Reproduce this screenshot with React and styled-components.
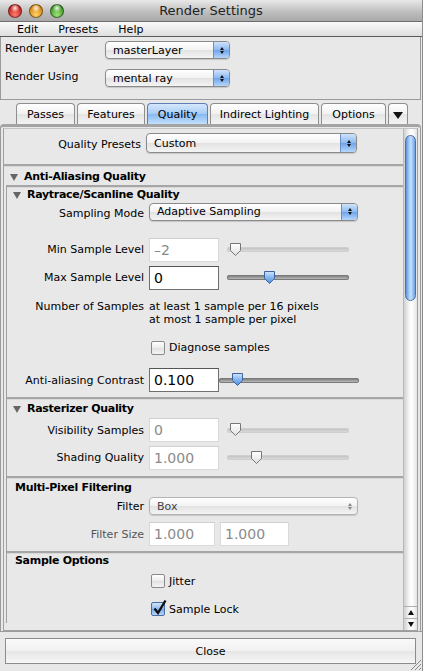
import React from 'react';
import styled, { createGlobalStyle, css } from 'styled-components';

const Global = createGlobalStyle`
  html, body { margin: 0; padding: 0; background: #e8e8e8; }
  * { box-sizing: border-box; }
  body { font-family: "DejaVu Sans", "Liberation Sans", sans-serif; font-size: 11px; color: #000; }
`;

const Window = styled.div`
  width: 423px;
  height: 671px;
  display: flex;
  flex-direction: column;
  background: #e8e8e8;
  border-right: 1px solid #8c8c8c;
  overflow: hidden;
  position: relative;
`;

const TitleBar = styled.div`
  height: 22px;
  flex: none;
  display: flex;
  align-items: center;
  position: relative;
  background: linear-gradient(#e8e8e8, #bcbcbc 60%, #a9a9a9);
  border-bottom: 1px solid #6e6e6e;
`;

const Lights = styled.div`
  display: flex;
  gap: 7px;
  padding-left: 8px;
`;

const Light = styled.span`
  width: 14px;
  height: 14px;
  border-radius: 50%;
  border: 1px solid rgba(0, 0, 0, 0.45);
  background:
    radial-gradient(circle at 50% 25%, rgba(255,255,255,0.9) 0, rgba(255,255,255,0) 40%),
    radial-gradient(circle at 50% 80%, ${p => p.$glow} 0, ${p => p.$c} 70%);
`;

const Title = styled.div`
  position: absolute;
  left: 0;
  right: 0;
  text-align: center;
  font-size: 13px;
  color: #222;
  pointer-events: none;
`;

const MenuBar = styled.div`
  height: 15px;
  flex: none;
  display: flex;
  align-items: center;
  padding-left: 17px;
  font-size: 11px;
  background: linear-gradient(#fafafa, #dedede);
  border-bottom: 1px solid #5a5a5a;
`;

const MenuItem = styled.span`
  margin-right: ${p => p.$mr}px;
`;

const TopPanel = styled.div`
  height: 63px;
  flex: none;
  border: 1px solid #9a9a9a;
  border-top: none;
  margin-right: 1px;
  padding: 4px 0 0 4px;
  display: flex;
  flex-direction: column;
  gap: 10px;
`;

const TopRow = styled.div`
  display: flex;
  align-items: center;
  height: 18px;
`;

const TopLabel = styled.span`
  width: 100px;
  margin-top: -4px;
`;

const Popup = styled.div`
  height: ${p => p.$h || 18}px;
  width: ${p => p.$w}px;
  display: flex;
  align-items: center;
  border: 1px solid ${p => (p.$disabled ? '#b4b4b4' : '#8a8a8a')};
  border-radius: 4px;
  background: linear-gradient(#ffffff, #f2f2f2 50%, #e2e2e2 51%, #f4f4f4);
  font-size: 11px;
  color: ${p => (p.$disabled ? '#444' : '#000')};
  overflow: hidden;
  box-shadow: 0 1px 1px rgba(0, 0, 0, 0.15);
`;

const PopupText = styled.span`
  flex: 1;
  padding-left: 7px;
`;

const PopupArrows = styled.span`
  width: 16px;
  align-self: stretch;
  display: flex;
  flex-direction: column;
  align-items: center;
  justify-content: center;
  gap: 1px;
  border-left: 1px solid ${p => (p.$disabled ? 'transparent' : '#6c8fc4')};
  background: ${p =>
    p.$disabled
      ? 'transparent'
      : 'linear-gradient(#cfe3fb, #8db9ef 50%, #6ea4ea 51%, #b6d6fb)'};
`;

const Arrow = styled.span`
  width: 0;
  height: 0;
  border-left: 2.5px solid transparent;
  border-right: 2.5px solid transparent;
  ${p =>
    p.$up
      ? css`border-bottom: 3px solid ${p.$disabled ? '#888' : '#111'};`
      : css`border-top: 3px solid ${p.$disabled ? '#888' : '#111'};`}
`;

const PopupButton = ({ text, w, h, disabled }) => (
  <Popup $w={w} $h={h} $disabled={disabled}>
    <PopupText>{text}</PopupText>
    <PopupArrows $disabled={disabled}>
      <Arrow $up $disabled={disabled} />
      <Arrow $disabled={disabled} />
    </PopupArrows>
  </Popup>
);

const TabBar = styled.div`
  height: 24px;
  flex: none;
  display: flex;
  align-items: flex-end;
  padding: 0 0 0 16px;
  gap: 2px;
  position: relative;
  z-index: 1;
`;

const Tab = styled.div`
  height: 21px;
  width: ${p => p.$w}px;
  flex: none;
  white-space: nowrap;
  display: flex;
  align-items: center;
  justify-content: center;
  font-size: 11px;
  border: 1px solid ${p => (p.$active ? '#5d7fb4' : '#8e8e8e')};
  border-bottom: none;
  border-radius: 4px 4px 0 0;
  background: ${p =>
    p.$active
      ? 'linear-gradient(#d6e8fc, #a6cbf4 50%, #86b8f0 51%, #c4e0fd)'
      : 'linear-gradient(#ffffff, #f1f1f1 50%, #e4e4e4 51%, #f3f3f3)'};
`;

const TabArrow = styled.span`
  width: 0;
  height: 0;
  border-left: 5px solid transparent;
  border-right: 5px solid transparent;
  border-top: 7px solid #111;
  margin-top: 3px;
`;

const TabPanel = styled.div`
  flex: 1;
  min-height: 0;
  margin: 0 1px 0 0;
  border-top: 3px solid #a4a4a4;
  border-left: 1px solid #9a9a9a;
  border-right: 1px solid #9a9a9a;
  border-radius: 4px 4px 0 0;
  padding: 1px 2px 0 2px;
  display: flex;
`;

const ScrollBox = styled.div`
  flex: 1;
  display: flex;
  min-height: 0;
  border: 1px solid #a0a0a0;
  border-top-color: #c4c4c4;
`;

const Content = styled.div`
  flex: 1;
  display: flex;
  flex-direction: column;
  overflow: hidden;
`;

const Scrollbar = styled.div`
  width: 14px;
  flex: none;
  display: flex;
  flex-direction: column;
  border-left: 1px solid #b8b8b8;
  background: linear-gradient(90deg, #d0d0d0, #f6f6f6 40%, #ffffff 60%, #e4e4e4);
`;

const Track = styled.div`
  flex: 1;
  padding: 6px 1px 0 1px;
`;

const Thumb = styled.div`
  height: 166px;
  border-radius: 6px;
  border: 1px solid #4f6fa8;
  background: linear-gradient(90deg, #5d92dc, #a7cdf7 35%, #c4e0fc 55%, #6a9fe4);
`;

const ScrollBtn = styled.div`
  height: 12px;
  display: flex;
  align-items: center;
  justify-content: center;
  border-top: 1px solid #b0b0b0;
`;

const SmallTri = styled.span`
  width: 0;
  height: 0;
  border-left: 3px solid transparent;
  border-right: 3px solid transparent;
  ${p => (p.$up ? 'border-bottom: 5px solid #111;' : 'border-top: 5px solid #111;')}
`;

const Row = styled.div`
  display: flex;
  align-items: ${p => (p.$top ? 'flex-start' : 'center')};
  height: ${p => p.$h}px;
  padding-top: ${p => p.$pt || 0}px;
  flex: none;
`;

const Label = styled.span`
  width: 142px;
  flex: none;
  text-align: right;
  padding-right: 5px;
  color: ${p => (p.$dim ? '#555' : '#000')};
  margin-top: ${p => p.$mt || 0}px;
  line-height: 13px;
`;

const Field = styled.div`
  width: ${p => p.$w || 70}px;
  height: 24px;
  flex: none;
  background: #fff;
  border: 1px solid ${p => (p.$disabled ? '#dadada' : '#6f6f6f')};
  border-top-color: ${p => (p.$disabled ? '#cfcfcf' : '#555')};
  display: flex;
  align-items: center;
  padding-left: 4px;
  font-size: 14px;
  color: ${p => (p.$disabled ? '#8a8a8a' : '#000')};
  margin-right: ${p => p.$mr || 0}px;
`;

const SliderWrap = styled.div`
  position: relative;
  width: ${p => p.$w}px;
  height: 14px;
  margin-left: ${p => p.$ml}px;
  display: flex;
  align-items: center;
`;

const SliderTrack = styled.div`
  width: 100%;
  height: 5px;
  border-radius: 3px;
  background: ${p =>
    p.$disabled ? 'linear-gradient(#bdbdbd, #e0e0e0)' : 'linear-gradient(#6a6a6a, #a8a8a8 60%, #c8c8c8)'};
  box-shadow: inset 0 0 0 1px ${p => (p.$disabled ? '#cfcfcf' : '#7a7a7a')};
`;

const SliderKnob = styled.svg`
  position: absolute;
  top: -1px;
`;

const Slider = ({ w, ml, pos, disabled }) => (
  <SliderWrap $w={w} $ml={ml}>
    <SliderTrack $disabled={disabled} />
    <SliderKnob width="13" height="15" viewBox="0 0 13 15" style={{ left: pos }}>
      <defs>
        <linearGradient id="kb" x1="0" y1="0" x2="0" y2="1">
          <stop offset="0" stopColor="#d2e6fc" />
          <stop offset="0.5" stopColor="#86b6ef" />
          <stop offset="1" stopColor="#4f8de0" />
        </linearGradient>
        <linearGradient id="kw" x1="0" y1="0" x2="0" y2="1">
          <stop offset="0" stopColor="#ffffff" />
          <stop offset="1" stopColor="#e0e0e0" />
        </linearGradient>
      </defs>
      <path
        d="M1.5 1.5 H11.5 V8.5 L6.5 13.5 L1.5 8.5 Z"
        fill={disabled ? 'url(#kw)' : 'url(#kb)'}
        stroke={disabled ? '#777' : '#3e64a0'}
        strokeWidth="1"
        strokeLinejoin="round"
      />
    </SliderKnob>
  </SliderWrap>
);

const Separator = styled.div`
  height: 3px;
  flex: none;
  background: #a6a6a6;
  border-bottom: 1px solid #d8d8d8;
`;

const Header = styled.div`
  display: flex;
  align-items: center;
  height: ${p => p.$h}px;
  flex: none;
  padding-left: ${p => p.$pl}px;
  font-weight: bold;
  font-size: 11px;
  letter-spacing: -0.3px;
`;

const Disclosure = styled.span`
  width: 0;
  height: 0;
  border-left: 4px solid transparent;
  border-right: 4px solid transparent;
  border-top: 7px solid #666;
  margin-right: 6px;
  margin-top: 2px;
`;

const Frame = styled.div`
  display: flex;
  flex-direction: column;
  border-left: 1px solid #a0a0a0;
  margin-left: 2px;
`;

const Spacer = styled.div`
  height: ${p => p.$h}px;
  flex: none;
`;

const CheckRow = styled.div`
  display: flex;
  align-items: center;
  height: ${p => p.$h}px;
  flex: none;
  padding-left: 144px;
  gap: 4px;
  font-size: 11px;
`;

const CheckBox = styled.span`
  width: 14px;
  height: 14px;
  border-radius: 2px;
  border: 1px solid ${p => (p.$checked ? '#4a6da6' : '#8a8a8a')};
  background: ${p =>
    p.$checked
      ? 'linear-gradient(#cfe4fc, #8fbbef 50%, #72a8ec 51%, #b8d8fb)'
      : 'linear-gradient(#ffffff, #ececec 50%, #e0e0e0 51%, #f5f5f5)'};
  position: relative;
  flex: none;
`;

const Check = styled.svg`
  position: absolute;
  left: 0;
  top: -4px;
`;

const Text = styled.span`
  font-size: 11px;
  line-height: 13px;
`;

const Footer = styled.div`
  height: 40px;
  flex: none;
  padding: 6px 6px 6px 5px;
  border-top: 1px solid #9c9c9c;
  position: relative;
`;

const CloseButton = styled.div`
  height: 26px;
  border: 1px solid #8c8c8c;
  display: flex;
  align-items: center;
  justify-content: center;
  font-size: 11px;
  background: linear-gradient(#fafafa, #f0f0f0 50%, #e6e6e6 51%, #f6f6f6);
`;

const Grip = styled.svg`
  position: absolute;
  right: 0;
  bottom: 0;
`;

export default function App() {
  return (
    <>
      <Global />
      <Window>
        <TitleBar>
          <Lights>
            <Light $c="#c7231e" $glow="#ff7b6f" />
            <Light $c="#d9850c" $glow="#ffd36a" />
            <Light $c="#3f9a25" $glow="#9fe37a" />
          </Lights>
          <Title>Render Settings</Title>
        </TitleBar>
        <MenuBar>
          <MenuItem $mr={20}>Edit</MenuItem>
          <MenuItem $mr={20}>Presets</MenuItem>
          <MenuItem $mr={0}>Help</MenuItem>
        </MenuBar>
        <TopPanel>
          <TopRow>
            <TopLabel>Render Layer</TopLabel>
            <PopupButton text="masterLayer" w={125} />
          </TopRow>
          <TopRow>
            <TopLabel>Render Using</TopLabel>
            <PopupButton text="mental ray" w={125} />
          </TopRow>
        </TopPanel>
        <TabBar>
          <Tab $w={59}>Passes</Tab>
          <Tab $w={68}>Features</Tab>
          <Tab $w={61} $active>Quality</Tab>
          <Tab $w={109}>Indirect Lighting</Tab>
          <Tab $w={65}>Options</Tab>
          <Tab $w={20}>
            <TabArrow />
          </Tab>
        </TabBar>
        <TabPanel>
          <ScrollBox>
            <Content>
              <Row $h={35} $top $pt={4}>
                <Label $mt={5}>Quality Presets</Label>
                <PopupButton text="Custom" w={211} h={20} />
              </Row>
              <Separator />
              <Header $h={18} $pl={6}>
                <Disclosure />
                Anti-Aliasing Quality
              </Header>
              <Frame>
                <Separator />
                <Header $h={13} $pl={6}>
                  <Disclosure />
                  Raytrace/Scanline Quality
                </Header>
                <Row $h={21}>
                  <Label $mt={3}>Sampling Mode</Label>
                  <PopupButton text="Adaptive Sampling" w={209} />
                </Row>
                <Spacer $h={14} />
                <Row $h={27}>
                  <Label>Min Sample Level</Label>
                  <Field $disabled>–2</Field>
                  <Slider w={122} ml={8} pos={2} disabled />
                </Row>
                <Row $h={29}>
                  <Label>Max Sample Level</Label>
                  <Field>0</Field>
                  <Slider w={122} ml={8} pos={36} />
                </Row>
                <Row $h={40} $top $pt={8}>
                  <Label>Number of Samples</Label>
                  <Text>
                    at least 1 sample per 16 pixels
                    <br />
                    at most 1 sample per pixel
                  </Text>
                </Row>
                <CheckRow $h={31}>
                  <CheckBox />
                  Diagnose samples
                </CheckRow>
                <Row $h={34}>
                  <Label>Anti-aliasing Contrast</Label>
                  <Field>0.100</Field>
                  <Slider w={140} ml={0} pos={12} />
                </Row>
                <Separator />
                <Header $h={16} $pl={6}>
                  <Disclosure />
                  Rasterizer Quality
                </Header>
                <Row $h={28}>
                  <Label>Visibility Samples</Label>
                  <Field $disabled>0</Field>
                  <Slider w={122} ml={8} pos={2} disabled />
                </Row>
                <Row $h={27}>
                  <Label>Shading Quality</Label>
                  <Field $disabled>1.000</Field>
                  <Slider w={122} ml={8} pos={23} disabled />
                </Row>
                <Spacer $h={5} />
              </Frame>
              <Frame>
                <Separator />
                <Header $h={16} $pl={8}>
                  Multi-Pixel Filtering
                </Header>
                <Row $h={22}>
                  <Label>Filter</Label>
                  <PopupButton text="Box" w={209} disabled />
                </Row>
                <Row $h={34}>
                  <Label $dim>Filter Size</Label>
                  <Field $disabled $w={66} $mr={5}>1.000</Field>
                  <Field $disabled $w={69}>1.000</Field>
                </Row>
              </Frame>
              <Frame>
                <Separator />
                <Header $h={13} $pl={8}>
                  Sample Options
                </Header>
                <CheckRow $h={28}>
                  <CheckBox />
                  Jitter
                </CheckRow>
                <CheckRow $h={28}>
                  <CheckBox $checked>
                    <Check width="16" height="18" viewBox="0 0 16 18">
                      <path d="M2.5 9.5 L6 14 L13.5 1.5" fill="none" stroke="#111" strokeWidth="2.4" />
                    </Check>
                  </CheckBox>
                  Sample Lock
                </CheckRow>
              </Frame>
            </Content>
            <Scrollbar>
              <Track>
                <Thumb />
              </Track>
              <ScrollBtn>
                <SmallTri $up />
              </ScrollBtn>
              <ScrollBtn>
                <SmallTri />
              </ScrollBtn>
            </Scrollbar>
          </ScrollBox>
        </TabPanel>
        <Footer>
          <CloseButton>Close</CloseButton>
          <Grip width="14" height="14" viewBox="0 0 14 14">
            <path d="M13 3 L3 13 M13 7 L7 13 M13 11 L11 13" stroke="#888" strokeWidth="1" />
          </Grip>
        </Footer>
      </Window>
    </>
  );
}
